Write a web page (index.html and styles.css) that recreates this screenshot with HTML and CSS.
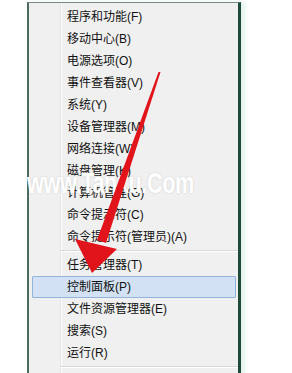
FILE: index.html
```html
<!DOCTYPE html>
<html lang="zh-CN">
<head>
    <meta charset="UTF-8">
    <title>Win+X 菜单</title>
    <link rel="stylesheet" href="styles.css">
</head>
<body>
    <div class="menu">
        <div class="item">程序和功能(F)</div>
        <div class="item">移动中心(B)</div>
        <div class="item">电源选项(O)</div>
        <div class="item">事件查看器(V)</div>
        <div class="item">系统(Y)</div>
        <div class="item">设备管理器(M)</div>
        <div class="item">网络连接(W)</div>
        <div class="item">磁盘管理(K)</div>
        <div class="item">计算机管理(G)</div>
        <div class="item">命令提示符(C)</div>
        <div class="item">命令提示符(管理员)(A)</div>
        <div class="sep"></div>
        <div class="item">任务管理器(T)</div>
        <div class="item active">控制面板(P)</div>
        <div class="item">文件资源管理器(E)</div>
        <div class="item">搜索(S)</div>
        <div class="item">运行(R)</div>
        <div class="sep"></div>
        <div class="tail"></div>
    </div>

    <!-- 水印 -->
    <div class="watermark">www.Tanxu.Com</div>

    <!-- 红色箭头 -->
    <svg class="arrow" width="292" height="373" viewBox="0 0 292 373">
        <polygon points="158.5,72 160.5,72 106,243 97,240" fill="#e0141a"/>
        <polygon points="75,239 117,249 92,273" fill="#e0141a"/>
    </svg>
</body>
</html>
```

FILE: styles.css
```css
html, body {
    height: 373px;
    overflow: hidden;
}

body {
    margin: 0;
    background: #fff;
    font-family: "Liberation Sans", "Noto Sans CJK SC", sans-serif;
    font-size: 12px;
    color: #111;
    position: relative;
}

.menu {
    box-sizing: border-box;
    width: 214px;
    margin: 2px 0 0 27px;
    padding-top: 3px;
    background: #f0f0f0;
    border-top: 1px solid #7d8c84;
    border-left: 2px solid #4d6b5c;
    border-right: 3px solid #1f4a3a;
    box-shadow: 4px 0 4px rgba(160, 215, 190, 0.3);
    /* полоса слева под иконки */
    background-image: linear-gradient(to right, transparent 31px, #e2e3e3 31px, #e2e3e3 32px, #fff 32px, #fff 33px, transparent 33px);
}

.item {
    height: 22px;
    line-height: 22px;
    padding-left: 35px;
    margin: 0 2px 0 3px;
    box-sizing: border-box;
    white-space: nowrap;
}

.item.active {
    background: #d2e2f4;
    border: 1px solid #93b4da;
    line-height: 20px;
    padding-left: 34px;
    border-radius: 1px;
}

.sep {
    height: 6px;
    margin-left: 31px;
    background: linear-gradient(to bottom, transparent 2px, #d7d7d7 2px, #d7d7d7 3px, #fff 3px, #fff 4px, transparent 4px);
}

.tail {
    height: 20px;
}

.watermark {
    position: absolute;
    left: 27px;
    top: 166px;
    font-family: "Liberation Sans", sans-serif;
    font-weight: bold;
    font-size: 30px;
    letter-spacing: -0.5px;
    color: #fff;
    text-shadow: 0 0 2px rgba(150, 150, 150, 0.45);
    transform: scaleX(0.72);
    transform-origin: left center;
}

.arrow {
    position: absolute;
    left: 0;
    top: 0;
}
```
